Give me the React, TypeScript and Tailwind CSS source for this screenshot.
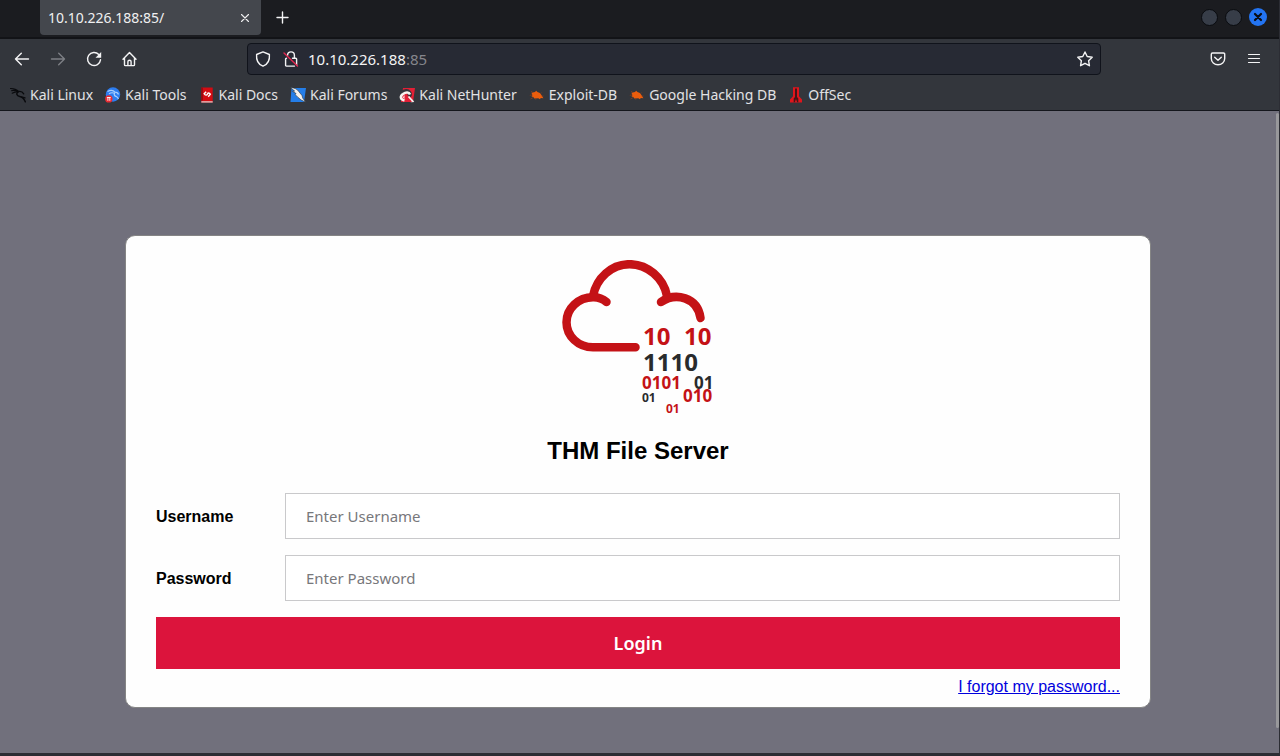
import type { ReactNode } from "react";

const uiFont = "font-['Noto_Sans',sans-serif]";

const stroke = {
  fill: "none",
  stroke: "currentColor",
  strokeLinecap: "round",
  strokeLinejoin: "round",
} as const;

function BackIcon() {
  return (
    <svg viewBox="0 0 16 16" className="size-4" {...stroke} strokeWidth="1.4">
      <path d="M14.500 8H1.500M7.300 2.200L1.500 8l5.800 5.800" />
    </svg>
  );
}

function ForwardIcon() {
  return (
    <svg viewBox="0 0 16 16" className="size-4" {...stroke} strokeWidth="1.4">
      <path d="M1.500 8h13M8.700 2.200L14.500 8l-5.800 5.800" />
    </svg>
  );
}

function ReloadIcon() {
  return (
    <svg viewBox="0 0 16 16" className="size-4" {...stroke} strokeWidth="1.4">
      <path d="M12.800 3.600A6.500 6.500 0 1 0 14.500 8.800" />
      <path d="M15.200 1v5.700H9.500z" fill="currentColor" stroke="none" />
    </svg>
  );
}

function HomeIcon() {
  return (
    <svg viewBox="0 0 16 16" className="size-4" {...stroke} strokeWidth="1.4">
      <path d="M1 8.200l6.500-6.700L14 8.200M2.500 7v6.700q0 .9.900.900h8.200q.9 0 .9-.900V7" />
      <path d="M5.900 14.300v-3.500a1.600 1.600 0 0 1 3.200 0v3.500" />
    </svg>
  );
}

function ShieldIcon() {
  return (
    <svg viewBox="0 0 16 16" className="size-4" {...stroke} strokeWidth="1.4">
      <path d="M8 .9l6.400 2.600c.5 5.400-1.200 9.700-6.400 11.700C2.800 13.200 1.100 8.900 1.600 3.500z" />
    </svg>
  );
}

function InsecureLockIcon() {
  return (
    <svg viewBox="0 0 16 16" className="size-4" {...stroke} strokeWidth="1.4">
      <path d="M4.600 4.300a3.400 3.400 0 0 1 6.800 0V7.200M9.500 7.200h3.200q.9 0 .9.900v6M11.500 15.100H3.500q-.9 0-.9-.900V8.100q0-.900.900-.900" />
      <path d="M1 2l13.500 13" stroke="#e22850" />
    </svg>
  );
}

function StarIcon() {
  return (
    <svg viewBox="0 0 16 16" className="size-4" {...stroke} strokeWidth="1.4">
      <path d="M8 1l2.200 4.500 5 .7-3.600 3.500.8 5L8 12.300 3.600 14.700l.8-5L.8 6.200l5-.7z" />
    </svg>
  );
}

function PocketIcon() {
  return (
    <svg viewBox="0 0 16 16" className="size-4" {...stroke} strokeWidth="1.4">
      <path d="M2.500 2h11a1.200 1.200 0 0 1 1.200 1.200V7.500a6.700 6.300 0 0 1-13.400 0V3.200A1.200 1.200 0 0 1 2.500 2z" />
      <path d="M4.700 6.200L8 9.300l3.300-3.100" />
    </svg>
  );
}

function MenuIcon() {
  return (
    <svg viewBox="0 0 16 16" className="size-4" {...stroke} strokeWidth="1.200">
      <path d="M2.500 3.500h11M2.500 7.500h11M2.500 11.500h11" />
    </svg>
  );
}

function KaliLinuxIcon() {
  return (
    <svg viewBox="0 0 16 16" className="size-4" {...stroke} stroke="#090a0d">
      <path d="M.5 1.500C4 1.400 6.500 2.400 8.800 4.600M1.500 3.700C4 3 6 3.300 8 4.500M2.200 6.200C4 5 6 4.500 8.500 4.600" strokeWidth="1.100" />
      <path d="M8.200 4.600C5.800 6.500 6.700 9 9.700 9.500c2.800.5 4.300 2 5.600 5.300" strokeWidth="1.500" />
      <path d="M8.200 4.600c2.500-.500 4.300 0 5.500 2.300M11.500 10l3.500.8" strokeWidth="1.300" />
    </svg>
  );
}

function KaliToolsIcon() {
  return (
    <svg viewBox="0 0 16 16" className="size-4">
      <circle cx="8" cy="7.500" r="7.200" fill="#2d7df0" />
      <path
        d="M2.500 4.500c3-1.700 6-1.100 7.500.7 2 0 3 .9 3.500 2.300M4 6.700c2-1.200 4-1.100 5.500-.4-1 2 .5 2.700 2.200 3.400 1 .6 1.500 1.500 1.700 2.300"
        fill="none"
        stroke="#a9cfff"
        strokeWidth="1.200"
      />
      <circle cx="3.800" cy="11.900" r="3.700" fill="#e92b32" />
      <path d="M1.900 10.500h3.800M2.900 10.500v3.300M4.800 10.500v3.300" stroke="#fff" strokeWidth=".9" />
    </svg>
  );
}

function KaliDocsIcon() {
  return (
    <svg viewBox="0 0 16 16" className="size-4">
      <path d="M2.300.5h11.400v15H2.300z" fill="#d30b12" />
      <path d="M2.300.5h1.500v13H2.300z" fill="#8c0b12" />
      <path d="M2.300 14.300h11.400v1.200H2.300z" fill="#e4dcda" />
      <path
        d="M7.200 4.700L5.200 6.700c1 2 2.800 1.600 3.300.3s1.700-1.500 2.800.2L9.200 9.700"
        fill="none"
        stroke="#fff"
        strokeWidth="1.400"
      />
    </svg>
  );
}

function KaliForumsIcon() {
  return (
    <svg viewBox="0 0 16 16" className="size-4">
      <path d="M1.500 1H16l-2 14H.5z" fill="#247ee9" />
      <path
        d="M.3.500C4.500.7 7.500 2.200 9 4.800l3 3.700.8 2.700 3 4-4.600-2.200-3.400-2.800L5 7.400l1.200-.8L2.500 4.300l2.200-.2z"
        fill="#f4f2ee"
        stroke="#27303b"
        strokeWidth=".6"
      />
    </svg>
  );
}

function KaliNetHunterIcon() {
  return (
    <svg viewBox="0 0 16 16" className="size-4">
      <path d="M4 1h12l-2 14H2z" fill="#e31f35" />
      <path
        d="M1 7C4.500 3.700 8.500 3.300 10.200 5.500c1.600 2.200 0 4.300-2.200 4"
        fill="none"
        stroke="#33363c"
        strokeWidth="4"
      />
      <path
        d="M5.500 13.500C1 12.500 1 9 4 7c3-2.200 6-2 7 .5M4.500 9.500l8.500 5"
        fill="none"
        stroke="#f7f3f0"
        strokeWidth="2.600"
      />
      <path d="M5.500 11c-.8-2 1.400-3.500 3.500-2.500l4.500 3.800-1 2.700H8z" fill="#e31f35" />
      <path d="M9.500 9.500l5 5.500" stroke="#f7f3f0" strokeWidth="1.800" />
    </svg>
  );
}

function BugIcon() {
  return (
    <svg viewBox="0 0 16 16" className="size-4">
      <path
        d="M2.500 5.800L6 5l1.200-1.300 1.200 1.200c2 .3 3.200 1.500 4 3l2 3.400-2.700-.2-.7 1.200-1.700-1-4 .2-1-1.400-1.800-.6.8-1.300z"
        fill="#ec5d0c"
      />
      <path
        d="M2.200 4l1.600 1.800M.8 8.300l2.500-.3M1.500 12l2.800-1.500M12.700 5.500l-1.200 1.200M6.500 12.800l1.200-1.300M14.500 9l-1.700.3"
        fill="none"
        stroke="#8f421c"
        strokeWidth=".7"
      />
    </svg>
  );
}

function OffSecIcon() {
  return (
    <svg viewBox="0 0 16 16" className="size-4">
      <path d="M5 .3h6v9l3 3.200v3H2v-3l3-3.200z" fill="#df151c" />
      <path d="M7 1.500h2V10l1.300 1.500v3.800H9.200L8 12l-1.200 3.300H5.700v-3.800L7 10z" fill="#431619" />
    </svg>
  );
}

const bookmarks: { name: string; icon: ReactNode }[] = [
  { name: "Kali Linux", icon: <KaliLinuxIcon /> },
  { name: "Kali Tools", icon: <KaliToolsIcon /> },
  { name: "Kali Docs", icon: <KaliDocsIcon /> },
  { name: "Kali Forums", icon: <KaliForumsIcon /> },
  { name: "Kali NetHunter", icon: <KaliNetHunterIcon /> },
  { name: "Exploit-DB", icon: <BugIcon /> },
  { name: "Google Hacking DB", icon: <BugIcon /> },
  { name: "OffSec", icon: <OffSecIcon /> },
];

function TabBar() {
  return (
    <div className="flex h-[39px] items-start border-b-2 border-[#121317] bg-[#1b1c20] pr-3 pl-10">
      <div className="flex h-[35px] w-[221px] items-center justify-between rounded-b bg-[#44474d] px-2 text-sm text-[#f0f0f1]">
        <span>10.10.226.188:85/</span>
        <button aria-label="Close tab" className="grid size-4 place-items-center">
          <svg viewBox="0 0 16 16" className="size-4" {...stroke} strokeWidth="1.100">
            <path d="M4.500 4.500l7 7M11.500 4.500l-7 7" />
          </svg>
        </button>
      </div>
      <button aria-label="New tab" className="ml-3 flex h-[35px] w-5 items-center justify-center text-[#f4f4f5]">
        <svg viewBox="0 0 16 16" className="size-4" {...stroke} strokeWidth="1.400">
          <path d="M7.500 2v11M2 7.500h11" />
        </svg>
      </button>
      <div className="ml-auto flex h-[34px] items-center gap-[7px]">
        <button aria-label="Minimize" className="size-[17px] rounded-full border border-[#090b0f] bg-[#373d48]" />
        <button aria-label="Maximize" className="size-[17px] rounded-full border border-[#090b0f] bg-[#373d48]" />
        <button aria-label="Close window" className="grid size-[18px] place-items-center rounded-full bg-[#2374f2] text-[#0a0c12]">
          <svg viewBox="0 0 16 16" className="size-4" {...stroke} strokeWidth="2.200">
            <path d="M5 5l6 6M11 5l-6 6" />
          </svg>
        </button>
      </div>
    </div>
  );
}

function NavBar() {
  return (
    <div className="flex h-10 items-center bg-[#33363c] px-[14px] text-[#f4f4f5]">
      <div className="flex w-[233px] items-center gap-5">
        <button aria-label="Back"><BackIcon /></button>
        <button aria-label="Forward" className="text-[#7d7f84]"><ForwardIcon /></button>
        <button aria-label="Reload"><ReloadIcon /></button>
        <button aria-label="Home"><HomeIcon /></button>
      </div>
      <div className="flex h-8 flex-1 items-center rounded border border-[#10131b] bg-[#272a34] px-[7px]">
        <ShieldIcon />
        <span className="ml-3"><InsecureLockIcon /></span>
        <div className="ml-[9px] flex-1 text-[15px] leading-5">
          10.10.226.188<span className="text-[#85868c]">:85</span>
        </div>
        <button aria-label="Bookmark this page"><StarIcon /></button>
      </div>
      <div className="flex w-[164px] items-center justify-end gap-5 pr-[3px]">
        <button aria-label="Save to Pocket"><PocketIcon /></button>
        <button aria-label="Menu"><MenuIcon /></button>
      </div>
    </div>
  );
}

function BookmarkBar() {
  return (
    <nav className="flex h-8 items-center gap-3 border-b border-[#14161c] bg-[#33363c] px-[10px] text-sm whitespace-nowrap text-[#e2e2e4]">
      {bookmarks.map((b) => (
        <a key={b.name} href="#" className="flex items-center gap-1">
          {b.icon}
          <span>{b.name}</span>
        </a>
      ))}
    </nav>
  );
}

function Logo() {
  return (
    <svg viewBox="0 0 152 158" role="img" aria-label="TryHackMe" className="mx-auto h-[158px] w-[152px]">
      <g fill="none" stroke="#c41216" strokeWidth="8.500" strokeLinecap="round">
        <path d="M31 36C34.500 18 49.500 4.200 67.500 4.200S101.500 18 105 36" strokeLinecap="butt" />
        <path d="M73.500 87.300H31a26.500 25 0 0 1 0-50Q38.500 37 44.500 42" />
        <path d="M99 42C113.500 32 135.500 37 138.500 58" />
      </g>
      <g className="font-['Noto_Sans',sans-serif] font-bold" fill="#c41216">
        <text x="81" y="85" fontSize="24">10</text>
        <text x="122" y="85" fontSize="24">10</text>
        <text x="81" y="111" fontSize="24" fill="#292b2c">1110</text>
        <text x="80" y="129" fontSize="17">0101</text>
        <text x="132" y="129" fontSize="17" fill="#292b2c">01</text>
        <text x="80" y="142" fontSize="12" fill="#292b2c">01</text>
        <text x="121" y="142" fontSize="17">010</text>
        <text x="104" y="153" fontSize="12">01</text>
      </g>
    </svg>
  );
}

function Field({ id, label, type }: { id: string; label: string; type: string }) {
  return (
    <div className="mb-4 flex items-center">
      <label htmlFor={id} className="w-[129px] shrink-0 pt-0.5 font-bold">
        {label}
      </label>
      <input
        id={id}
        type={type}
        placeholder={"Enter " + label}
        className="h-[46px] min-w-0 flex-1 border border-[#c9c9cb] bg-white px-5 font-['Noto_Sans',sans-serif] text-[15px] placeholder:text-[#77777b] placeholder:opacity-100"
      />
    </div>
  );
}

export default function App() {
  return (
    <div className={"flex min-h-screen flex-col border-r border-b-3 border-[#2c2d34] bg-[#71707c] " + uiFont}>
      <header>
        <TabBar />
        <NavBar />
        <BookmarkBar />
      </header>
      <div className="flex flex-1 pt-0.5">
        <main className="flex-1 px-[125px] pt-[122px] pb-11 font-['Liberation_Sans',sans-serif] text-base text-black">
          <form
            onSubmit={(e) => e.preventDefault()}
            className="rounded-[10px] border border-[#858585] bg-[#fefefe] px-[30px] pt-6 pb-2"
          >
            <Logo />
            <h1 className="mt-[17px] mb-[26px] text-center text-2xl font-bold">THM File Server</h1>
            <Field id="username" label="Username" type="text" />
            <Field id="password" label="Password" type="password" />
            <button
              type="submit"
              className="h-[52px] w-full bg-[#dc143c] font-['Noto_Sans',sans-serif] text-lg font-semibold text-white"
            >
              Login
            </button>
            <div className="mt-1.5 text-right">
              <a href="#" className="text-[#0000dd] underline">I forgot my password...</a>
            </div>
          </form>
        </main>
        <div className="mb-[25px] w-[3px] shrink-0 rounded-full bg-[#98989b]" />
      </div>
    </div>
  );
}
